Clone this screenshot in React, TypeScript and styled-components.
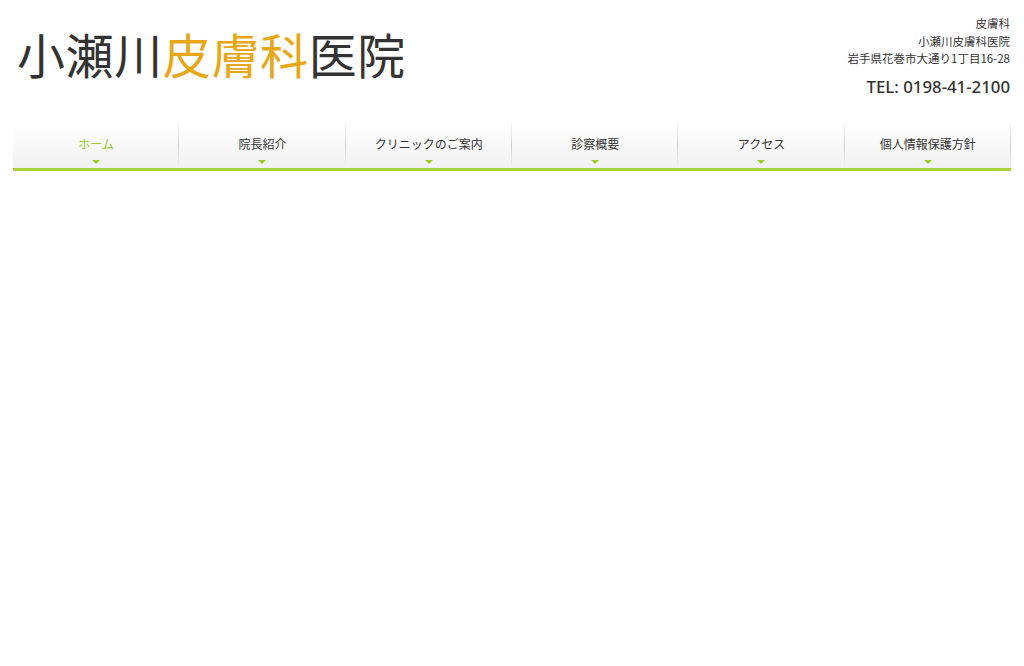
import { ReactElement } from "react";
import styled, { createGlobalStyle } from "styled-components";

const menu = [
  "ホーム",
  "院長紹介",
  "クリニックのご案内",
  "診察概要",
  "アクセス",
  "個人情報保護方針",
];

export default function App(): ReactElement {
  return (
    <>
      <GlobalStyle />
      <Page>
        <Header>
          <Logo>
            小瀬川<Accent>皮膚科</Accent>医院
          </Logo>
          <Info>
            <InfoLine>皮膚科</InfoLine>
            <InfoLine>小瀬川皮膚科医院</InfoLine>
            <InfoLine>岩手県花巻市大通り1丁目16-28</InfoLine>
            <Tel>TEL: 0198-41-2100</Tel>
          </Info>
        </Header>
        <Nav>
          {menu.map((label, i) => (
            <NavItem key={label}>
              <NavLabel $active={i === 0}>{label}</NavLabel>
              <Arrow />
            </NavItem>
          ))}
        </Nav>
      </Page>
    </>
  );
}

const GlobalStyle = createGlobalStyle`
  body {
    margin: 0;
    background: #fff;
    font-family: "Noto Sans CJK JP", "Noto Sans", sans-serif;
    color: #333;
  }
`;

const Page = styled.div`
  width: 998px;
  margin-left: 13px;
`;

const Header = styled.header`
  display: flex;
  justify-content: space-between;
  align-items: flex-start;
  height: 124px;
`;

const Logo = styled.h1`
  margin: 20px 0 0 4px;
  font-size: 48px;
  font-weight: 400;
  letter-spacing: 0.6px;
  line-height: 66px;
  color: #333;
`;

const Accent = styled.span`
  color: #e8a619;
`;

const Info = styled.div`
  display: flex;
  flex-direction: column;
  align-items: flex-end;
  padding-top: 15px;
  padding-right: 1px;
`;

const InfoLine = styled.div`
  font-size: 11.5px;
  line-height: 17.5px;
  color: #333;
`;

const Tel = styled.div`
  margin-top: 7px;
  font-family: "Noto Sans", "Noto Sans CJK JP", sans-serif;
  font-size: 16.8px;
  font-weight: 500;
  color: #333;
`;

const Nav = styled.nav`
  display: flex;
  height: 44px;
  border-bottom: 3px solid #a6d336;
  background: linear-gradient(#ffffff, #f1f1f1);
`;

const NavItem = styled.div`
  position: relative;
  flex: 1;
  display: flex;
  flex-direction: column;
  align-items: center;
  padding-top: 12px;
  box-sizing: border-box;
  &::after {
    content: "";
    position: absolute;
    right: 0;
    top: 0;
    bottom: 0;
    width: 1px;
    background: linear-gradient(#f4f4f4, #cfcfcf 50%, #f4f4f4);
  }
`;

const NavLabel = styled.span<{ $active?: boolean }>`
  font-size: 12px;
  line-height: 16px;
  color: ${(p) => (p.$active ? "#96c82e" : "#333")};
`;

const Arrow = styled.span`
  margin-top: 8px;
  width: 0;
  height: 0;
  border-left: 4px solid transparent;
  border-right: 4px solid transparent;
  border-top: 4px solid #9ccb2c;
`;
